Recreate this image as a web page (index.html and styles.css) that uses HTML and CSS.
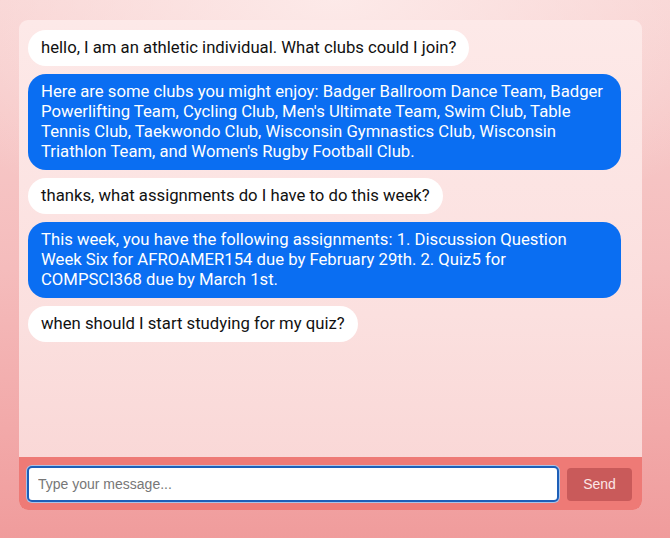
FILE: index.html
```html
<!DOCTYPE html>
<html lang="en">
<head>
<meta charset="utf-8">
<title>Chat</title>
<link rel="stylesheet" href="styles.css">
</head>
<body>
<div class="chat">
  <div class="messages">
    <div class="msg user">hello, I am an athletic individual. What clubs could I join?</div>
    <div class="msg bot">Here are some clubs you might enjoy: Badger Ballroom Dance Team, Badger Powerlifting Team, Cycling Club, Men's Ultimate Team, Swim Club, Table Tennis Club, Taekwondo Club, Wisconsin Gymnastics Club, Wisconsin Triathlon Team, and Women's Rugby Football Club.</div>
    <div class="msg user">thanks, what assignments do I have to do this week?</div>
    <div class="msg bot">This week, you have the following assignments: 1. Discussion Question Week Six for AFROAMER154 due by February 29th. 2. Quiz5 for COMPSCI368 due by March 1st.</div>
    <div class="msg user">when should I start studying for my quiz?</div>
  </div>
  <form class="composer">
    <input class="input" type="text" placeholder="Type your message...">
    <button class="send" type="button">Send</button>
  </form>
</div>
</body>
</html>
```
FILE: styles.css
```css
html, body {
  height: 100%;
}
body {
  margin: 0;
  padding: 20px 28px 28px 19px;
  box-sizing: border-box;
  background:
    radial-gradient(ellipse 70% 45% at 50% 0%, rgba(253,236,235,0.9), rgba(253,236,235,0) 100%),
    linear-gradient(180deg, #f8d2d1 0%, #f5bcbc 50%, #f09c9c 100%);
  font-family: Roboto, "Noto Sans", sans-serif;
}
.chat {
  height: 490px;
  display: flex;
  flex-direction: column;
  border-radius: 9px;
  overflow: hidden;
  background: linear-gradient(180deg, #fde9e8 0%, #fbe0df 60%, #f9d5d4 100%);
}
.messages {
  flex: 1;
  display: flex;
  flex-direction: column;
  align-items: flex-start;
  gap: 8px;
  padding: 10px 21px 10px 9px;
}
.msg {
  padding: 8px 13px;
  border-radius: 18px;
  font-size: 16.7px;
  line-height: 20px;
}
.user {
  background: #ffffff;
  color: #111111;
}
.bot {
  background: #0a6ef2;
  color: #ffffff;
}
.composer {
  margin: 0;
  display: flex;
  align-items: center;
  gap: 8px;
  padding: 9px 10px 8px 8px;
  background: #ee7a76;
}
.input {
  flex: 1;
  height: 36px;
  box-sizing: border-box;
  border: 2px solid #1d5fb8;
  box-shadow: 0 0 0 1px #a9c3e8;
  border-radius: 5px;
  padding: 0 9px;
  font-family: "Liberation Sans", Arial, sans-serif;
  font-size: 14px;
  background: #ffffff;
  outline: none;
}
.input::placeholder {
  color: #777777;
}
.send {
  width: 65px;
  height: 33px;
  border: none;
  border-radius: 4px;
  background: #c95a5a;
  color: #fce6e6;
  font-family: "Liberation Sans", Arial, sans-serif;
  font-size: 14px;
}
```
